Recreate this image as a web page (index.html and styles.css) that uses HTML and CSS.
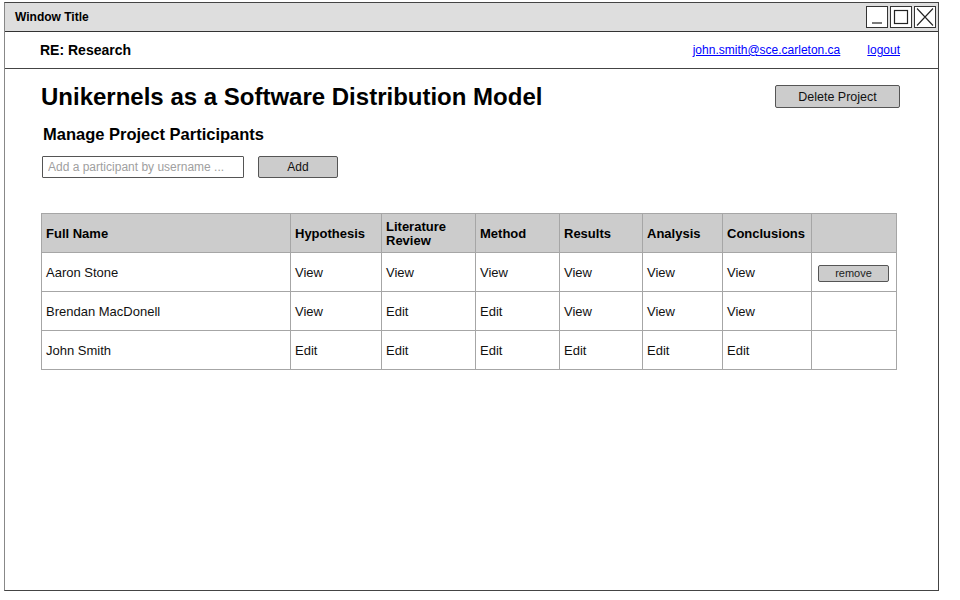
FILE: index.html
```html
<!DOCTYPE html>
<html>
<head>
<meta charset="utf-8">
<title>Unikernels as a Software Distribution Model</title>
<link rel="stylesheet" href="styles.css">
</head>
<body>
<div class="window">
  <div class="titlebar">
    <span class="wtitle">Window Title</span>
    <div class="wctrls">
      <span class="wbtn"><svg width="20" height="20" viewBox="0 0 20 20"><path d="M5 16H15" stroke="#222" stroke-width="1.2" fill="none"/></svg></span>
      <span class="wbtn"><svg width="20" height="20" viewBox="0 0 20 20"><rect x="3.5" y="3.5" width="13" height="13" stroke="#222" stroke-width="1.2" fill="none"/></svg></span>
      <span class="wbtn"><svg width="20" height="20" viewBox="0 0 20 20"><path d="M2 1.5L18 18.5M18 1.5L2 18.5" stroke="#222" stroke-width="1.1" fill="none"/></svg></span>
    </div>
  </div>
  <div class="header">
    <span class="crumb">RE: Research</span>
    <a class="link email" href="#">john.smith@sce.carleton.ca</a>
    <a class="link" href="#">logout</a>
  </div>
  <div class="content">
    <div class="title-row">
      <h1 class="ptitle">Unikernels as a Software Distribution Model</h1>
      <button class="sbtn delete">Delete Project</button>
    </div>
    <h2 class="subtitle">Manage Project Participants</h2>
    <div class="add-row">
      <input class="field" type="text" placeholder="Add a participant by username ...">
      <button class="sbtn add">Add</button>
    </div>
    <div class="grid">
      <div class="cell th">Full Name</div>
      <div class="cell th">Hypothesis</div>
      <div class="cell th">Literature Review</div>
      <div class="cell th">Method</div>
      <div class="cell th">Results</div>
      <div class="cell th">Analysis</div>
      <div class="cell th">Conclusions</div>
      <div class="cell th"></div>

      <div class="cell">Aaron Stone</div>
      <div class="cell">View</div>
      <div class="cell">View</div>
      <div class="cell">View</div>
      <div class="cell">View</div>
      <div class="cell">View</div>
      <div class="cell">View</div>
      <div class="cell"><button class="rbtn">remove</button></div>

      <div class="cell">Brendan MacDonell</div>
      <div class="cell">View</div>
      <div class="cell">Edit</div>
      <div class="cell">Edit</div>
      <div class="cell">View</div>
      <div class="cell">View</div>
      <div class="cell">View</div>
      <div class="cell"></div>

      <div class="cell">John Smith</div>
      <div class="cell">Edit</div>
      <div class="cell">Edit</div>
      <div class="cell">Edit</div>
      <div class="cell">Edit</div>
      <div class="cell">Edit</div>
      <div class="cell">Edit</div>
      <div class="cell"></div>
    </div>
  </div>
</div>
</body>
</html>
```
FILE: styles.css
```css
html, body {
  margin: 0;
  padding: 0;
  background: #fff;
}
body {
  font-family: "Liberation Sans", Arial, sans-serif;
  color: #000;
}
.window {
  margin: 2px 0 0 4px;
  width: 935px;
  height: 589px;
  box-sizing: border-box;
  border: 1px solid #444;
  border-left-color: #888;
  display: flex;
  flex-direction: column;
}
.titlebar {
  height: 29px;
  box-sizing: border-box;
  background: #dedede;
  border-bottom: 1px solid #333;
  display: flex;
  align-items: center;
  padding: 0 2px 0 10px;
}
.wtitle {
  font-size: 12px;
  font-weight: bold;
}
.wctrls {
  margin-left: auto;
  display: flex;
  gap: 2px;
}
.wbtn {
  width: 22px;
  height: 22px;
  box-sizing: border-box;
  border: 1px solid #333;
  background: #fff;
  display: flex;
  align-items: center;
  justify-content: center;
}
.wbtn svg { display: block; }
.header {
  height: 37px;
  box-sizing: border-box;
  border-bottom: 1px solid #444;
  display: flex;
  align-items: center;
  padding: 0 38px 0 35px;
}
.crumb {
  font-size: 14px;
  font-weight: bold;
}
.link {
  font-size: 12px;
  color: #0000ff;
  text-decoration: underline;
}
.email {
  margin-left: auto;
  margin-right: 27px;
}
.content {
  padding: 14px 38px 0 36px;
}
.title-row {
  display: flex;
  align-items: flex-start;
  justify-content: space-between;
}
.ptitle {
  margin: 0;
  font-size: 24px;
  line-height: 28px;
  font-weight: bold;
}
.sbtn {
  font-family: "Liberation Sans", Arial, sans-serif;
  background: #cccccc;
  border: 1px solid #555;
  border-radius: 2px;
  color: #111;
  padding: 0;
  margin: 0;
  box-sizing: border-box;
}
.delete {
  margin-top: 2px;
  width: 125px;
  height: 23px;
  font-size: 12.5px;
}
.subtitle {
  margin: 13px 0 0 2px;
  font-size: 16.5px;
  line-height: 20px;
  font-weight: bold;
}
.add-row {
  display: flex;
  gap: 14px;
  margin: 12px 0 0 1px;
}
.field {
  width: 202px;
  height: 22px;
  box-sizing: border-box;
  border: 1px solid #555;
  border-radius: 1px;
  padding: 0 5px;
  margin: 0;
  font-family: "Liberation Sans", Arial, sans-serif;
  font-size: 12px;
  outline: none;
}
.field::placeholder {
  color: #a0a0a0;
}
.add {
  width: 80px;
  height: 22px;
  font-size: 12px;
}
.grid {
  margin-top: 35px;
  display: grid;
  grid-template-columns: 249px 91px 94px 84px 83px 80px 89px 85px;
  grid-auto-rows: 39px;
  width: 856px;
  box-sizing: border-box;
  border-left: 1px solid #a6a6a6;
  border-top: 1px solid #a6a6a6;
}
.cell {
  box-sizing: border-box;
  border-right: 1px solid #a6a6a6;
  border-bottom: 1px solid #a6a6a6;
  display: flex;
  align-items: center;
  padding: 2px 4px 0;
  font-size: 13px;
  line-height: 14px;
  color: #111;
}
.th {
  background: #cccccc;
  font-weight: bold;
  color: #000;
  padding-top: 1px;
}
.rbtn {
  margin: 0 0 0 2px;
  width: 71px;
  height: 17px;
  box-sizing: border-box;
  background: #cccccc;
  border: 1px solid #555;
  border-radius: 2px;
  padding: 0;
  font-family: "Liberation Sans", Arial, sans-serif;
  font-size: 11px;
  color: #222;
}
```
